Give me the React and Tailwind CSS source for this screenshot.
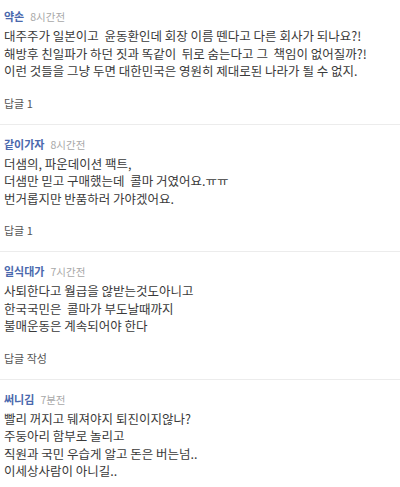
const comments = [
  {
    name: '약손',
    time: '8시간전',
    lines: [
      '대주주가 일본이고  윤동환인데 회장 이름 뗀다고 다른 회사가 되나요?!',
      '해방후 친일파가 하던 짓과 똑같이  뒤로 숨는다고 그  책임이 없어질까?!',
      '이런 것들을 그냥 두면 대한민국은 영원히 제대로된 나라가 될 수 없지.',
    ],
    reply: '답글 1',
  },
  {
    name: '같이가자',
    time: '8시간전',
    lines: [
      '더샘의, 파운데이션 팩트,',
      '더샘만 믿고 구매했는데  콜마 거였어요.ㅠㅠ',
      '번거롭지만 반품하러 가야겠어요.',
    ],
    reply: '답글 1',
  },
  {
    name: '일식대가',
    time: '7시간전',
    lines: [
      '사퇴한다고 월급을 않받는것도아니고',
      '한국국민은  콜마가 부도날때까지',
      '불매운동은 계속되어야 한다',
    ],
    reply: '답글 작성',
  },
  {
    name: '써니김',
    time: '7분전',
    lines: [
      '빨리 꺼지고 뒈져야지 퇴진이지않나?',
      '주둥아리 함부로 놀리고',
      '직원과 국민 우습게 알고 돈은 버는넘..',
      '이세상사람이 아니길..',
    ],
    reply: null,
  },
];

function Comment({ c, first }) {
  return (
    <div className={first ? 'px-1 pt-[9px] pb-[14px]' : 'px-1 pt-[12px] pb-[14px] border-t border-[#ececec]'}>
      <div className="flex items-baseline gap-[6px] leading-[14px]">
        <span className="text-[11px] font-bold text-[#4a68ad]">{c.name}</span>
        <span className="text-[10.5px] text-[#a8a8a8]">{c.time}</span>
      </div>
      <div className="mt-[3px] text-[12.5px] leading-[17.5px] text-[#3a3a3a] whitespace-pre">
        {c.lines.map((l, i) => (
          <div key={i}>{l}</div>
        ))}
      </div>
      {c.reply && (
        <div className="mt-[16px] text-[11px] leading-[14px] text-[#555]">{c.reply}</div>
      )}
    </div>
  );
}

export default function App() {
  return (
    <div
      className="w-[400px] h-[487px] overflow-hidden bg-white"
      style={{ fontFamily: '"Noto Sans CJK KR", "Noto Sans", sans-serif' }}
    >
      {comments.map((c, i) => (
        <Comment key={i} c={c} first={i === 0} />
      ))}
    </div>
  );
}
